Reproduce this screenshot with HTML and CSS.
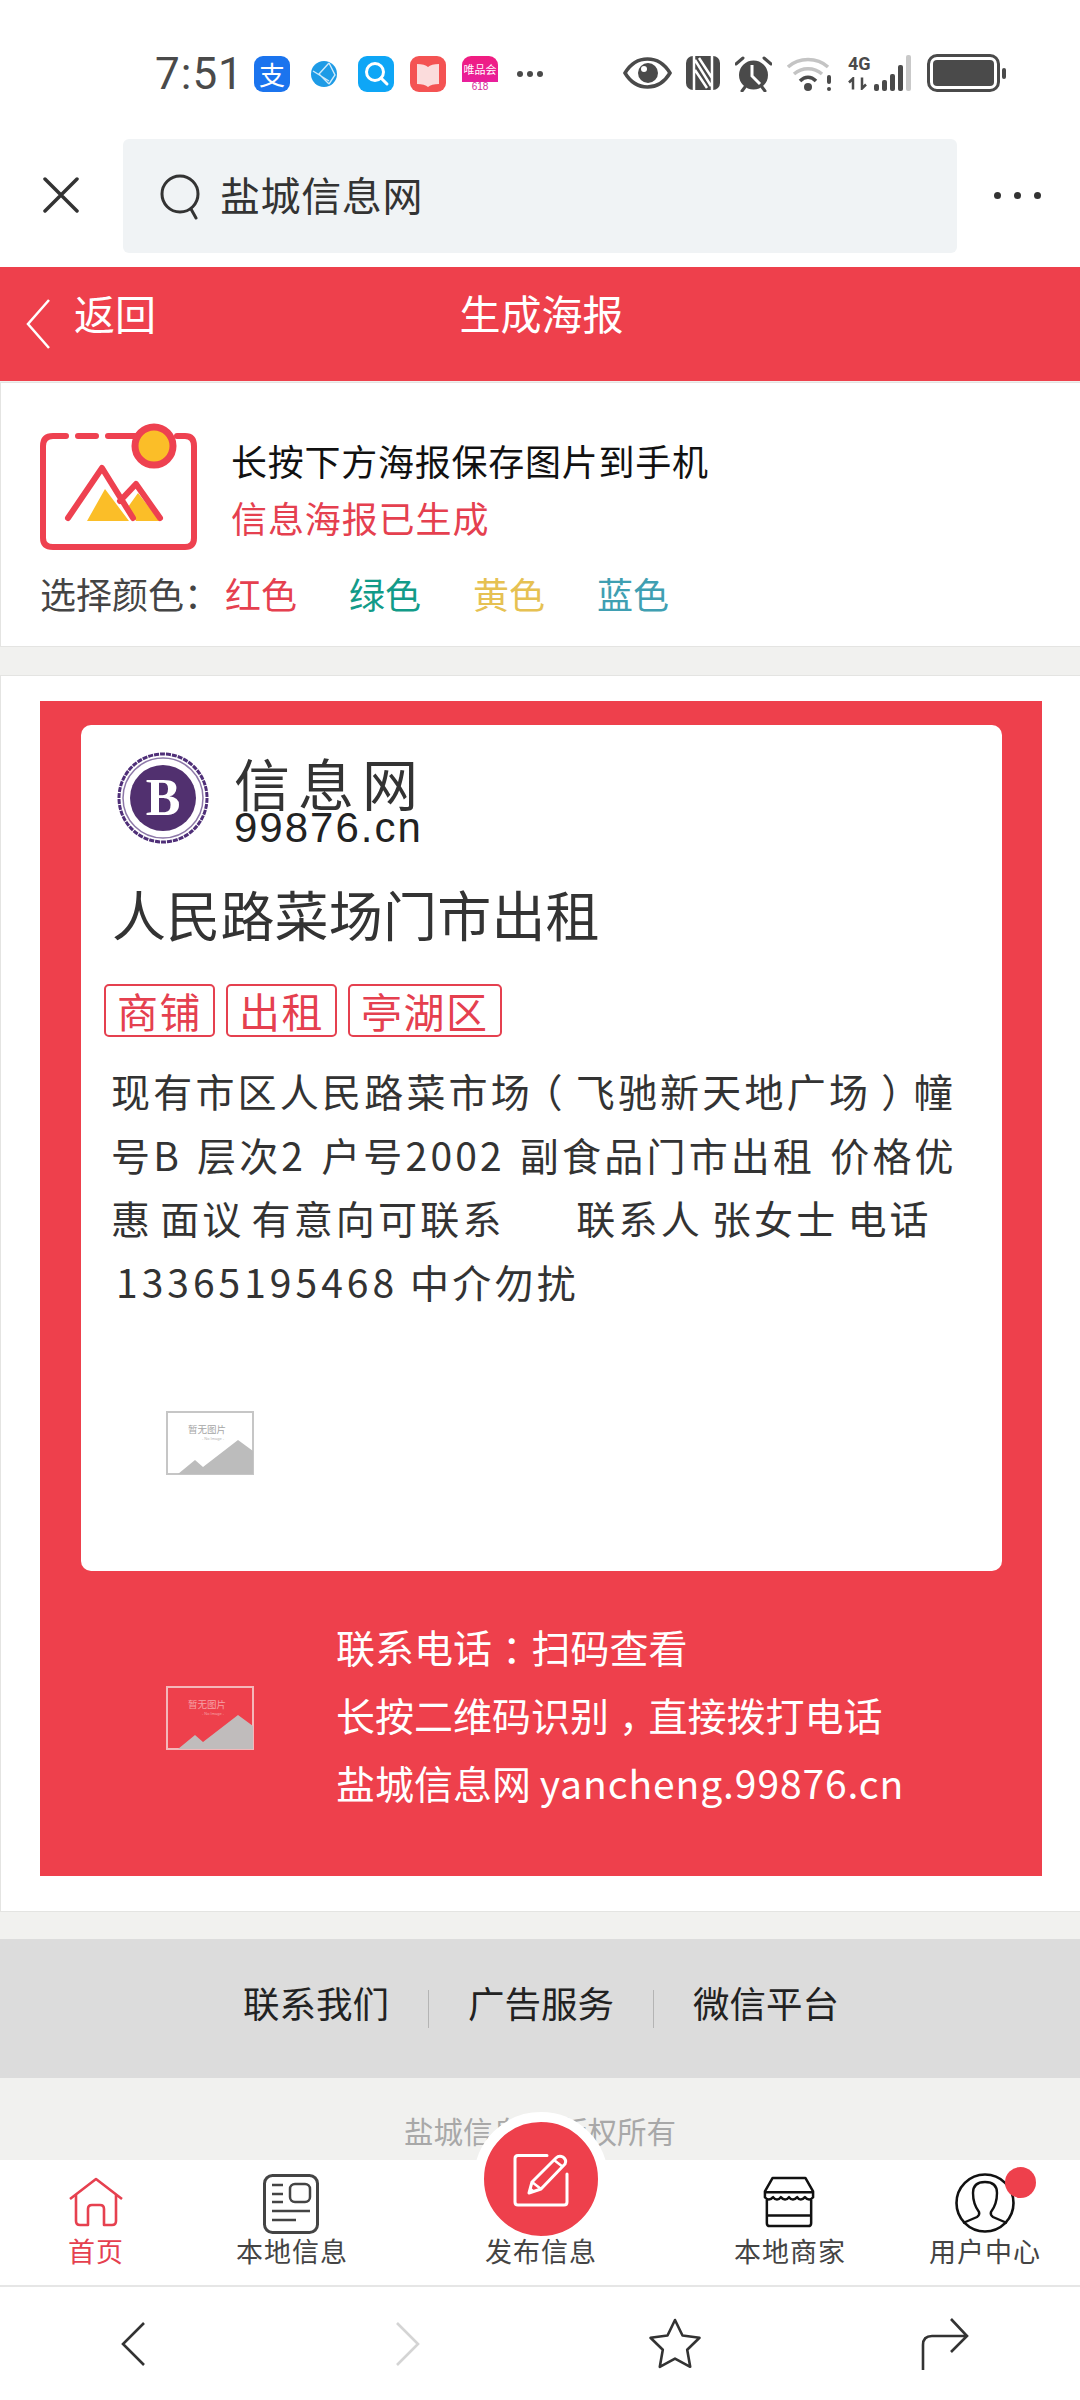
FILE: index.html
```html
<!DOCTYPE html>
<html lang="zh-CN">
<head>
<meta charset="utf-8">
<title>生成海报</title>
<link rel="stylesheet" href="styles.css">
</head>
<body>
<div class="phone">
  <header class="status">
    <span class="time">7:51</span>
    <span class="app app-ali">支</span>
    <svg class="globe" viewBox="0 0 26 26"><circle cx="13" cy="13" r="13" fill="#1e9be6"/><path d="M2 10l16 10M18 2L8 13l10 10M18 2l6 12-6 9" stroke="#cfeafa" stroke-width="1.4" fill="none"/></svg>
    <svg class="app app-search" viewBox="0 0 36 36"><circle cx="17" cy="16" r="8.5" fill="none" stroke="#fff" stroke-width="3"/><path d="M23 22l6 6" stroke="#fff" stroke-width="3" stroke-linecap="round"/></svg>
    <svg class="app app-book" viewBox="0 0 36 36"><path d="M7 8c5 0 9 1 11 3 2-2 6-3 11-3v20c-5 0-9 1-11 3-2-2-6-3-11-3z" fill="#fbdcdc"/></svg>
    <span class="app app-vip"><span class="vip-top">唯品会</span><span class="vip-date">618</span></span>
    <span class="dots"><i></i><i></i><i></i></span>
    <span class="status-right">
      <svg class="st-eye" viewBox="0 0 49 32"><path d="M2 16C8 6 16 2 24.500 2S41 6 47 16C41 26 33 30 24.500 30S8 26 2 16z" fill="none" stroke="#4a4a4a" stroke-width="3.500"/><circle cx="25" cy="16" r="10" fill="#4a4a4a"/><circle cx="21" cy="12" r="3" fill="#fff"/></svg>
      <svg class="st-nfc" viewBox="0 0 34 34"><rect width="34" height="34" rx="7" fill="#4a4a4a"/><path d="M8 0v34M26 0v34M9 4l16 26M9 14l12 18M13 2l13 20" stroke="#fff" stroke-width="2.500" fill="none"/></svg>
      <svg class="st-alarm" viewBox="0 0 37 37"><circle cx="18.500" cy="20" r="14.500" fill="#4a4a4a"/><path d="M1 9l7-6M36 9l-7-6M7 36l3-4M30 36l-3-4" stroke="#4a4a4a" stroke-width="3" stroke-linecap="round"/><path d="M17 10v11l8 8" stroke="#fff" stroke-width="3" fill="none"/></svg>
      <svg class="st-wifi" viewBox="0 0 46 37"><path d="M1 12C12 2 30 2 41 12" stroke="#c4c4c4" stroke-width="3.500" fill="none"/><path d="M7 19C15 12 27 12 35 19" stroke="#c4c4c4" stroke-width="3.500" fill="none"/><path d="M13 26C18 21 24 21 29 26" stroke="#4a4a4a" stroke-width="3.500" fill="none"/><circle cx="21" cy="32" r="4" fill="#4a4a4a"/><rect x="40" y="20" width="4" height="9" rx="2" fill="#4a4a4a"/><rect x="40" y="32" width="4" height="4" rx="2" fill="#4a4a4a"/></svg>
      <span class="st-net"><span class="net-4g">4G</span><svg class="net-arrows" viewBox="0 0 20 12"><path d="M5 12V1L1 5M14 0v11l4-4" stroke="#4a4a4a" stroke-width="2.500" fill="none"/></svg></span>
      <span class="bars"><i class="b1"></i><i class="b2"></i><i class="b3"></i><i class="b4"></i><i class="b5"></i></span>
      <span class="battery"><span class="battery-fill"></span></span><span class="battery-nub"></span>
    </span>
  </header>

  <div class="searchrow">
    <svg class="ic-close" viewBox="0 0 36 36"><path d="M2 2l32 32M34 2L2 34" stroke="#333" stroke-width="3.500" stroke-linecap="round"/></svg>
    <div class="searchbox">
      <svg class="ic-search" viewBox="0 0 42 46"><circle cx="20" cy="20" r="18" fill="none" stroke="#333" stroke-width="3"/><path d="M31 35l5 9" stroke="#333" stroke-width="3" stroke-linecap="round"/></svg>
      <span class="searchtext">盐城信息网</span>
    </div>
    <span class="more"><i></i><i></i><i></i></span>
  </div>

  <div class="redbar">
    <svg class="ic-back" viewBox="0 0 26 52"><path d="M24 2L3 26l21 24" stroke="#fff" stroke-width="2.500" fill="none"/></svg>
    <span class="back-label">返回</span>
    <span class="redbar-title">生成海报</span>
  </div>

  <main class="content">
    <section class="card intro">
      <div class="intro-top">
        <svg class="intro-ic" viewBox="0 0 158 127">
          <path d="M26 13H13Q3 13 3 23v92q0 9 10 9h132q9 0 9-9V23q0-10-9-10h-8" fill="none" stroke="#ee4150" stroke-width="6" stroke-linecap="round"/>
          <path d="M38 13h18M68 13h30" stroke="#ee4150" stroke-width="6" stroke-linecap="round"/>
          <circle cx="114" cy="23" r="19" fill="#fbbe28" stroke="#ee4150" stroke-width="7"/>
          <path d="M47 98l18-32 24 32zM88 84l10-14 22 28H96z" fill="#fbbe28"/>
          <path d="M28 95l34-50 31 50M80 78l16-17 24 34" fill="none" stroke="#ee4150" stroke-width="6" stroke-linecap="round" stroke-linejoin="round"/>
        </svg>
        <div class="intro-text">
          <p class="intro-main">长按下方海报保存图片到手机</p>
          <p class="intro-sub">信息海报已生成</p>
        </div>
      </div>
      <div class="colors">
        <span class="colors-label">选择颜色：</span>
        <span class="c-red">红色</span>
        <span class="c-green">绿色</span>
        <span class="c-yellow">黄色</span>
        <span class="c-blue">蓝色</span>
      </div>
    </section>

    <section class="card postercard">
      <div class="poster">
        <div class="sheet">
          <div class="logo">
            <svg class="logo-mark" viewBox="0 0 92 92"><circle cx="46" cy="46" r="44" fill="none" stroke="#4f2f78" stroke-width="3" stroke-dasharray="5 1"/><circle cx="46" cy="46" r="40" fill="none" stroke="#8d78a8" stroke-width="1.500"/><circle cx="46" cy="46" r="33" fill="#51306f"/><text class="logo-b" x="46" y="63" text-anchor="middle">B</text></svg>
            <div class="logo-text">
              <span class="logo-cn">信息网</span>
              <span class="logo-en">99876.cn</span>
            </div>
          </div>
          <h1 class="title">人民路菜场门市出租</h1>
          <div class="tags"><span class="tag">商铺</span><span class="tag">出租</span><span class="tag">亭湖区</span></div>
          <p class="desc">现有市区人民路菜市场<span class="paren">（</span>飞驰新天地广场<span class="paren">）</span>幢<span class="ws-wide">号B 层次2 户号2002 副食品门市出租 价格优</span><span class="ws-tight">惠 面议 有意向可联系</span> &nbsp; &nbsp; &nbsp;<span class="name">联系人 张女士 电话</span> <span class="num">13365195468</span> 中介勿扰</p>
          <div class="noimg-wrap">
            <svg class="noimg" viewBox="0 0 88 64"><rect x="1" y="1" width="86" height="62" fill="none" stroke="#c6c6c6" stroke-width="2"/><path d="M12 63l17-14 8 7 35-27 15 11v23z" fill="#bcbcbc"/><text class="noimg-t" x="41" y="22" text-anchor="middle">暂无图片</text><text class="noimg-s" x="47" y="29" text-anchor="middle">- No Image -</text></svg>
          </div>
        </div>
        <div class="contact">
          <svg class="noimg" viewBox="0 0 88 64"><rect x="1" y="1" width="86" height="62" fill="none" stroke="#f4b7b9" stroke-width="2"/><path d="M12 63l17-14 8 7 35-27 15 11v23z" fill="#c0bcbc"/><text class="noimg-t noimg-t-red" x="41" y="22" text-anchor="middle">暂无图片</text><text class="noimg-s noimg-t-red" x="47" y="29" text-anchor="middle">- No Image -</text></svg>
          <div class="contact-lines">
            <p>联系电话<span class="punct">：</span>扫码查看</p>
            <p>长按二维码识别<span class="punct">，</span>直接拨打电话</p>
            <p>盐城信息网 <span class="latin">yancheng.99876.cn</span></p>
          </div>
        </div>
      </div>
    </section>

    <nav class="links"><a>联系我们</a><i></i><a>广告服务</a><i></i><a>微信平台</a></nav>
    <div class="copyright">盐城信息网 版权所有</div>
  </main>

  <nav class="tabs">
    <div class="tab tab-on">
      <svg class="t-home" viewBox="0 0 54 50"><path d="M1 22L27 2l26 20M7 18v26q0 4 4 4h8V32q0-4 4-4h8q4 0 4 4v16h8q4 0 4-4V18" fill="none" stroke="#e6404f" stroke-width="2.600" stroke-linejoin="round"/></svg>
      <span>首页</span>
    </div>
    <div class="tab">
      <svg class="t-info" viewBox="0 0 56 60"><rect x="1.500" y="1.500" width="53" height="57" rx="8" fill="none" stroke="#444" stroke-width="3"/><path d="M9 11h11M9 20h11M9 28h11M9 37h38M9 46h24" stroke="#444" stroke-width="2.500"/><rect x="27" y="10" width="20" height="18" rx="5" fill="none" stroke="#444" stroke-width="2.500"/></svg>
      <span>本地信息</span>
    </div>
    <div class="tab tab-pub">
      <span class="pub-btn">
        <svg viewBox="0 0 56 56"><path d="M34 4.500H5q-3 0-3 3V51q0 3 3 3h46q3 0 3-3V23" fill="none" stroke="#fff" stroke-width="3" stroke-linecap="round"/><path d="M16 42l3-11L43 7q3-3 7-1 4 3 2 7L28 38z" fill="none" stroke="#fff" stroke-width="3" stroke-linejoin="round"/><path d="M19 31l9 7M41 9l9 7" stroke="#fff" stroke-width="2.500"/><path d="M16 42l1-6 5 4z" fill="#fff"/></svg>
      </span>
      <span class="pub-label">发布信息</span>
    </div>
    <div class="tab">
      <svg class="t-store" viewBox="0 0 54 54"><path d="M10 2h34l8 14v6q-4 5-8.500 0-4.500 5-8 0-4.500 5-8.500 0-4 5-8.500 0-4 5-8 0-4.500 5-8.500 0v-6z" fill="none" stroke="#111" stroke-width="2.600" stroke-linejoin="round"/><path d="M2 17h50" stroke="#111" stroke-width="2.600"/><path d="M4 25v24q0 3 3 3h40q3 0 3-3V25M4 41h46" fill="none" stroke="#111" stroke-width="2.600"/></svg>
      <span>本地商家</span>
    </div>
    <div class="tab">
      <svg class="t-user" viewBox="0 0 60 60"><circle cx="30" cy="30" r="28.500" fill="none" stroke="#111" stroke-width="2.600"/><path d="M8 50l14-6q3-2 2-5-6-8-6-19 0-11 12-11t12 11q0 11-6 19-1 3 2 5l14 6" fill="none" stroke="#111" stroke-width="2.400"/></svg>
      <span>用户中心</span>
      <b class="badge"></b>
    </div>
  </nav>

  <footer class="browser">
    <svg class="b-back" viewBox="0 0 24 44"><path d="M23 1L2 22l21 21" fill="none" stroke="#333" stroke-width="2.600"/></svg>
    <svg class="b-back" viewBox="0 0 24 44"><path d="M1 1l21 21L1 43" fill="none" stroke="#d4d4d4" stroke-width="2.600"/></svg>
    <svg class="b-star" viewBox="0 0 54 52"><path d="M27 2l7.500 15.500 17 2.300-12.300 12 3 17L27 40.600 11.800 48.800l3-17-12.300-12 17-2.300z" fill="none" stroke="#333" stroke-width="2.600" stroke-linejoin="round"/></svg>
    <svg class="b-share" viewBox="0 0 48 52"><path d="M2 52V27q0-9 9-9h34M30 1l16 17-16 16" fill="none" stroke="#333" stroke-width="2.600"/></svg>
  </footer>
</div>
</body>
</html>
```

FILE: styles.css
```css
* { box-sizing: border-box; }
html, body { margin: 0; padding: 0; }
body { background: #fff; font-family: "Noto Sans CJK SC", "Noto Sans", sans-serif; }
p, h1 { margin: 0; font-weight: 400; }
.phone { width: 1080px; height: 2400px; display: flex; flex-direction: column; overflow: hidden; background: #f1f1ef; }

/* status bar */
.status { height: 139px; flex: none; background: #fff; display: flex; align-items: flex-start; padding: 54px 0 0 155px; color: #4a4a4a; }
.time { font: 400 44px/40px Roboto, sans-serif; width: 84px; margin-right: 15px; color: #4a4a4a; letter-spacing: 1px; }
.app { width: 36px; height: 36px; border-radius: 9px; margin-top: 2px; flex: none; display: block; }
.app-ali { background: #1b74ee; color: #fff; font-size: 26px; line-height: 36px; text-align: center; }
.globe { width: 26px; height: 26px; margin: 7px 21px 0; flex: none; }
.app-search { background: #0ea6f6; }
.app-book { background: #f45353; margin-left: 16px; }
.app-vip { margin-left: 16px; background: linear-gradient(#f01d80 0, #e81f9c 72%, #fff 72%); position: relative; display: flex; flex-direction: column; align-items: center; overflow: hidden; }
.vip-top { color: #fff; font-size: 11px; line-height: 26px; white-space: nowrap; }
.vip-date { color: #d62a9b; font: 10px/10px "Liberation Sans", sans-serif; }
.dots { display: flex; gap: 4px; margin: 17px 0 0 19px; }
.dots i { width: 6px; height: 6px; border-radius: 50%; background: #4a4a4a; }
.status-right { display: flex; align-items: flex-start; margin-left: 80px; }
.st-eye { width: 49px; height: 32px; margin-top: 3px; }
.st-nfc { width: 34px; height: 34px; margin: 2px 0 0 14px; }
.st-alarm { width: 37px; height: 37px; margin: 1px 0 0 15px; }
.st-wifi { width: 46px; height: 37px; margin: 1px 0 0 15px; }
.st-net { width: 26px; margin-left: 15px; display: flex; flex-direction: column; }
.net-4g { font: 700 18px/20px Roboto, sans-serif; color: #4a4a4a; }
.net-arrows { width: 20px; height: 13px; margin-top: 3px; }
.bars { display: flex; gap: 3px; align-items: flex-end; height: 36px; margin-top: 1px; }
.bars i { width: 5px; background: #4a4a4a; border-radius: 2px; }
.bars .b1 { height: 7px; } .bars .b2 { height: 11px; } .bars .b3 { height: 17px; } .bars .b4 { height: 26px; } .bars .b5 { height: 36px; background: #c9c9c9; }
.battery { width: 73px; height: 38px; margin-left: 16px; border: 3px solid #4a4a4a; border-radius: 10px; padding: 3px; display: flex; margin-top: 0; }
.battery-fill { flex: 1; background: #4a4a4a; border-radius: 4px; }
.battery-nub { width: 4px; height: 11px; margin: 14px 0 0 2px; background: #4a4a4a; border-radius: 2px; }

/* search row */
.searchrow { height: 128px; flex: none; background: #fff; display: flex; align-items: flex-start; }
.ic-close { width: 36px; height: 36px; margin: 38px 0 0 43px; flex: none; }
.searchbox { width: 834px; height: 114px; margin-left: 44px; background: #f0f3f5; border-radius: 6px; display: flex; align-items: center; padding-left: 37px; }
.ic-search { width: 42px; height: 46px; flex: none; margin-top: 2px; }
.searchtext { margin: 0 0 5px 18px; font-size: 40px; line-height: 48px; letter-spacing: .6px; color: #333; }
.more { display: flex; gap: 13px; margin: 53px 0 0 37px; }
.more i { width: 7px; height: 7px; border-radius: 50%; background: #333; }

/* red bar */
.redbar { height: 114px; flex: none; background: #ee404c; position: relative; display: flex; align-items: flex-start; color: #fff; font-size: 41px; line-height: 48px; }
.ic-back { width: 26px; height: 52px; margin: 31px 0 0 25px; flex: none; }
.back-label { margin: 21px 0 0 23px; }
.redbar-title { position: absolute; left: 0; right: 0; top: 21px; text-align: center; padding-left: 3px; }

/* content */
.content { flex: 1; min-height: 0; overflow: hidden; padding-top: 1px; }
.card { background: #fff; border-top: 1px solid #e4e4e2; border-bottom: 1px solid #e4e4e2; border-left: 1px solid #e4e4e2; }
.intro { height: 265px; padding: 40px 0 0 39px; }
.intro-top { display: flex; align-items: flex-start; }
.intro-ic { width: 158px; height: 127px; flex: none; }
.intro-text { margin-left: 33px; padding-top: 9px; }
.intro-main { font-size: 36px; line-height: 57px; letter-spacing: .75px; color: #111; }
.intro-sub { font-size: 36px; line-height: 56px; letter-spacing: .9px; color: #e5404f; }
.colors { display: flex; font-size: 36px; line-height: 54px; margin-top: 16px; color: #444; }
.colors-label { width: 185px; }
.colors span + span { width: 124px; }
.c-red { color: #e5404f; } .c-green { color: #129b88; } .c-yellow { color: #e6c152; } .c-blue { color: #3f9fb2; }

.postercard { margin-top: 28px; height: 1237px; padding: 25px 0 0 39px; }
.poster { width: 1002px; height: 1175px; background: #ee404c; padding-top: 24px; }
.sheet { width: 921px; height: 846px; margin-left: 41px; background: #fff; border-radius: 10px; padding: 27px 0 0 23px; }
.logo { display: flex; align-items: flex-start; margin-left: 13px; }
.logo-mark { width: 92px; height: 92px; flex: none; }
.logo-b { font: 700 52px "Liberation Serif", serif; fill: #fff; }
.logo-text { margin: 2px 0 0 25px; display: flex; flex-direction: column; }
.logo-cn { font-size: 56px; line-height: 56px; letter-spacing: 8px; color: #333; }
.logo-en { font: 400 42px/36px "Liberation Sans", sans-serif; letter-spacing: 2px; color: #222; }
.title { margin: 29px 0 0 8px; font-size: 54px; line-height: 78px; letter-spacing: .2px; color: #333; }
.tags { display: flex; margin-top: 31px; }
.tag { height: 53px; padding: 0 11px; margin-right: 11px; border: 2px solid #e5404f; border-radius: 5px; color: #e5404f; font-size: 41px; line-height: 48px; letter-spacing: 1.500px; }
.desc { margin: 22px 20px 0 7px; font-size: 39px; line-height: 63.600px; letter-spacing: 3.200px; color: #333; }
.paren { font-feature-settings: "halt"; padding: 0 10px; }
.ws-wide { word-spacing: 3px; }
.ws-tight { word-spacing: -5px; }
.name { word-spacing: -3px; }
.num { letter-spacing: 4px; margin-left: 5px; }
.noimg-wrap { margin: 98px 0 0 62px; }
.noimg { width: 88px; height: 64px; flex: none; display: block; }
.noimg-t { font-size: 9.500px; fill: #a5a5a5; }
.noimg-s { font: 4px "Liberation Sans", sans-serif; fill: #b5b5b5; }
.noimg-t-red { fill: #f6a0a5; }
.contact { display: flex; align-items: center; height: 293px; padding-left: 126px; color: #fff; }
.contact-lines { margin-left: 82px; padding-bottom: 8px; font-size: 39px; line-height: 68px; }
.punct { font-feature-settings: "halt"; padding: 0 10px; }
.latin { letter-spacing: .9px; }

.links { margin-top: 27px; height: 139px; background: #dcdcdc; display: flex; justify-content: center; align-items: center; font-size: 36.500px; color: #222; padding: 0 0 12px 2px; }
.links i { width: 1px; height: 38px; background: #b4b4b4; margin: 12px 39px 0; }
.copyright { text-align: center; font-size: 29.500px; line-height: 42px; color: #a8a8a8; padding-top: 31px; }

/* tabs */
.tabs { height: 127px; flex: none; background: #fff; border-bottom: 2px solid #e6e6e6; display: grid; grid-template-columns: 192px 200px 298px 200px 190px; position: relative; }
.tab { display: flex; flex-direction: column; align-items: center; justify-content: flex-end; position: relative; font-size: 27px; line-height: 36px; letter-spacing: 1px; color: #444; padding-bottom: 16px; }
.tab-on { color: #e5404f; }
.t-home { width: 54px; height: 50px; margin-bottom: 6px; }
.t-info { width: 56px; height: 60px; margin: 0 0 -1px -2px; }
.t-store { width: 54px; height: 52px; margin: 0 0 5px -2px; }
.t-user { width: 60px; height: 60px; margin-bottom: 0; }
.pub-btn { position: absolute; left: 82px; top: -48px; width: 134px; height: 134px; border-radius: 50%; background: #ee404c; border: 10px solid #fff; display: flex; align-items: center; justify-content: center; }
.pub-btn svg { width: 56px; height: 56px; }
.pub-label { position: relative; }
.badge { position: absolute; left: 115px; top: 7px; width: 31px; height: 31px; border-radius: 50%; background: #ee404c; }

/* browser bar */
.browser { height: 113px; flex: none; background: #fff; display: grid; grid-template-columns: 265px 286px 248px 281px; align-items: center; justify-items: center; }
.b-back { width: 24px; height: 44px; }
.b-star { width: 54px; height: 52px; }
.b-share { width: 48px; height: 52px; margin-left: 11px; }
```
